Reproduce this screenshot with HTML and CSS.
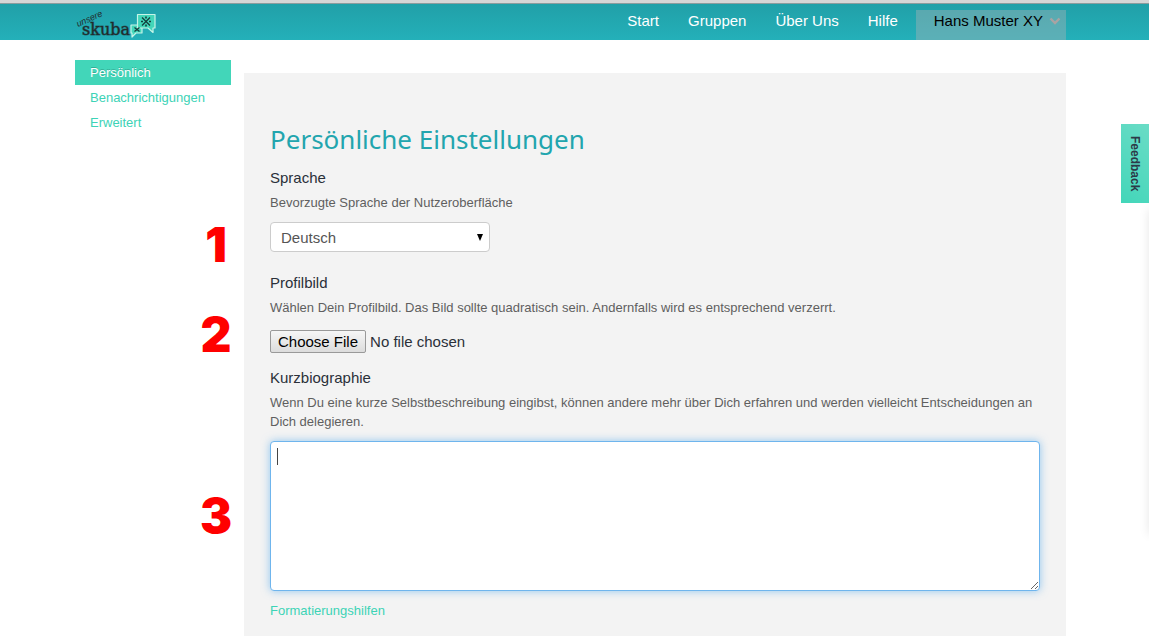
FILE: index.html
```html
<!DOCTYPE html>
<html lang="de">
<head>
<meta charset="utf-8">
<meta name="viewport" content="width=device-width, initial-scale=1">
<title>Persönliche Einstellungen</title>
<link rel="stylesheet" href="styles.css">
</head>
<body>
<header class="topbar">
  <div class="container topbar-inner">
    <a class="logo" href="#" aria-label="unsere skuba">
      <svg width="82" height="30" viewBox="0 0 82 30">
        <text class="logo-small" transform="translate(3 17) rotate(-24)">unsere</text>
        <text class="logo-name" x="7" y="25">skuba</text>
        <g stroke="#c5f4e8" stroke-width="1.2" stroke-linejoin="round">
          <path fill="#42d6b9" d="M56 15h11v8h-6l-4 4v-4h-1z"/>
          <path fill="#42d6b9" d="M62.500 4.500h17.500v13.500h-2v4.500l-5-4.500h-10.500z"/>
        </g>
        <g stroke="#143d3c" stroke-width="1.300" fill="none">
          <path d="M67 7.500l8 8M75 7.500l-8 8M59.500 17.500l5 4M64.500 17.500l-5 4"/>
        </g>
        <g fill="#143d3c">
          <path d="M70.200 6.500h1.600v2h-1.600zM70.200 14.500h1.600v2h-1.600zM66 10.700h2v1.600h-2zM74 10.700h2v1.600h-2z"/>
        </g>
      </svg>
    </a>
    <nav class="nav">
      <a href="#">Start</a>
      <a href="#">Gruppen</a>
      <a href="#">Über Uns</a>
      <a href="#">Hilfe</a>
      <button class="user" type="button">Hans Muster XY
        <svg width="12" height="9" viewBox="0 0 12 9"><path d="M1.500 1.500L6 6l4.500-4.500" fill="none" stroke="#a9a3a3" stroke-width="2.400"/></svg>
      </button>
    </nav>
  </div>
</header>

<div class="content">
  <div class="container page">
    <nav class="side" aria-label="Einstellungen">
      <a class="active" href="#">Persönlich</a>
      <a href="#">Benachrichtigungen</a>
      <a href="#">Erweitert</a>
    </nav>
    <main class="panel">
      <h1>Persönliche Einstellungen</h1>
      <form>
        <div class="field field-language">
          <span class="step step-language">1</span>
          <label for="language">Sprache</label>
          <p class="help">Bevorzugte Sprache der Nutzeroberfläche</p>
          <div class="select">
            <select id="language"><option>Deutsch</option></select>
            <svg width="6" height="7" viewBox="0 0 6 7"><path d="M0 0h6L3 7z"/></svg>
          </div>
        </div>
        <div class="field field-picture">
          <span class="step step-picture">2</span>
          <label for="picture">Profilbild</label>
          <p class="help">Wählen Dein Profilbild. Das Bild sollte quadratisch sein. Andernfalls wird es entsprechend verzerrt.</p>
          <input class="file" id="picture" type="file">
        </div>
        <div class="field">
          <span class="step step-bio">3</span>
          <label for="bio">Kurzbiographie</label>
          <p class="help">Wenn Du eine kurze Selbstbeschreibung eingibst, können andere mehr über Dich erfahren und werden vielleicht Entscheidungen an Dich delegieren.</p>
          <textarea id="bio"></textarea>
          <a class="format" href="#">Formatierungshilfen</a>
        </div>
      </form>
    </main>
  </div>
</div>

<button class="feedback" type="button">Feedback</button>
<div class="drawer"></div>
</body>
</html>
```
FILE: styles.css
```css
* { box-sizing: border-box; }

body {
  margin: 0;
  background: #fff;
  color: #2a3039;
  font: 15px/20px "Liberation Sans", Arial, sans-serif;
  overflow-x: hidden;
}

a { color: #3dd3b6; text-decoration: none; }

.container {
  max-width: 991px;
  margin: 0 auto;
}

.topbar {
  height: 40px;
  padding-right: 8px;
  border-top: 3px solid #d6d6d6;
  background: linear-gradient(#8b9c9e 1px, #21a0a8 1px, #24b0b9);
}

.topbar-inner {
  display: flex;
  justify-content: space-between;
  align-items: flex-end;
  height: 37px;
}

.logo, .logo svg { display: block; overflow: visible; }

.logo-name {
  font: 16px "DejaVu Serif", serif;
  fill: #202b2c;
  stroke: #202b2c;
  stroke-width: 1px;
  stroke-opacity: 0.5;
}

.logo-small {
  font: italic 9px "Liberation Sans", sans-serif;
  fill: #202b2c;
}

.nav {
  display: flex;
  gap: 29px;
  height: 30px;
}

.nav a { color: #fff; line-height: 22px; }

.user {
  display: flex;
  gap: 6px;
  margin-left: -11px;
  padding: 0 5px 0 18px;
  border: 0;
  background: rgba(160, 178, 182, 0.45);
  color: #000;
  font: 15px/22px "Liberation Sans", Arial, sans-serif;
}

.user svg { margin-top: 7px; }

.content { padding: 20px 8px 0 0; }

.page {
  display: flex;
  gap: 13px;
  align-items: flex-start;
}

.side {
  display: flex;
  flex: 0 0 156px;
  flex-direction: column;
  font-size: 13px;
}

.side a { padding: 0 15px; line-height: 25px; }

.side .active {
  background: #42d6b9;
  color: #fff;
  text-shadow: 0 -1px 0 rgba(0, 0, 0, 0.2);
}

.panel {
  flex: 1;
  min-width: 0;
  margin-top: 13px;
  padding: 46px 26px 40px;
  background: #f3f3f3;
}

h1 {
  margin: 0 0 9px;
  color: #22a5ae;
  font: 400 26px/40px "Noto Sans", sans-serif;
}

.field { position: relative; }
.field-language { margin-bottom: 21px; }
.field-picture { margin-bottom: 15px; }
.field label { display: block; }

.help {
  margin: 5px 0 10px;
  color: #5f5f5f;
  font-size: 13px;
  line-height: 19px;
}

.select {
  position: relative;
  max-width: 220px;
}

.select select {
  display: block;
  width: 100%;
  height: 30px;
  padding: 0 10px;
  appearance: none;
  border: 1px solid #ccc;
  border-radius: 4px;
  background: #fff;
  color: #555;
  font: 15px "Liberation Sans", Arial, sans-serif;
}

.select svg {
  position: absolute;
  top: 12px;
  right: 7px;
  pointer-events: none;
}

.file {
  display: block;
  width: 100%;
  height: 23px;
  margin-top: 13px;
  color: #2a3039;
  font: 15px/18px "Liberation Sans", Arial, sans-serif;
}

.file::file-selector-button {
  height: 23px;
  margin: 0 4px 0 0;
  padding: 1px 7px;
  border: 1px solid #999;
  border-radius: 2px;
  background: linear-gradient(#f6f6f6, #dcdcdc);
  color: #000;
  font: inherit;
}

/* The one-pixel gradient is the text cursor of the focused box. */
textarea {
  display: block;
  width: 100%;
  height: 150px;
  margin-bottom: 9px;
  padding: 4px 6px;
  border: 1px solid #6fb5ed;
  border-radius: 4px;
  outline: 0;
  background: linear-gradient(#444, #444) 6px 6px / 1px 17px no-repeat #fff;
  box-shadow: 0 0 8px rgba(82, 168, 236, 0.6);
  font: 15px/20px "Liberation Sans", Arial, sans-serif;
  resize: both;
}

.format { font-size: 13px; }

.step {
  position: absolute;
  right: calc(100% + 38px);
  width: 32px;
  color: #f00;
  font: 900 48px/48px Inter, sans-serif;
  text-align: center;
}

.step-language { top: 53px; }
.step-picture { top: 38px; }
.step-bio { top: 124px; }

.feedback {
  position: fixed;
  top: 124px;
  right: 0;
  width: 28px;
  height: 79px;
  padding: 0;
  border: 0;
  background: linear-gradient(45deg, #42d6b9, #6adcc6);
  color: #2c3a48;
  font: bold 12px/28px "Liberation Sans", Arial, sans-serif;
  writing-mode: vertical-rl;
}

/* Closed side drawer; only its shadow reaches into the window. */
.drawer {
  position: fixed;
  top: 210px;
  left: 100%;
  width: 200px;
  height: 324px;
  box-shadow: 0 0 10px rgba(0, 0, 0, 0.1);
}
```
